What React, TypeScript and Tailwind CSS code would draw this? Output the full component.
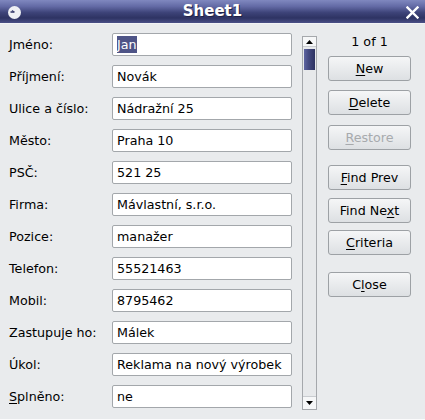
import React from "react";

const fields: [string, string, number?][] = [
  ["Jméno:", "Jan"],
  ["Příjmení:", "Novák"],
  ["Ulice a číslo:", "Nádražní 25"],
  ["Město:", "Praha 10"],
  ["PSČ:", "521 25"],
  ["Firma:", "Mávlastní, s.r.o."],
  ["Pozice:", "manažer"],
  ["Telefon:", "55521463"],
  ["Mobil:", "8795462"],
  ["Zastupuje ho:", "Málek"],
  ["Úkol:", "Reklama na nový výrobek"],
  ["Splněno:", "ne", 0],
];

function Mn({ text, at, disabled }: { text: string; at: number; disabled?: boolean }) {
  return (
    <span className={disabled ? "text-[#a7aaad]" : "text-black"}>
      {text.slice(0, at)}
      <span className="underline underline-offset-2">{text[at]}</span>
      {text.slice(at + 1)}
    </span>
  );
}

function Btn({ text, at, disabled, className }: { text: string; at: number; disabled?: boolean; className?: string }) {
  return (
    <div
      className={
        "h-[25px] w-[83px] flex items-center justify-center rounded-[3px] border border-[#9da1a5] bg-gradient-to-b from-[#f5f6f7] to-[#dde0e3] " +
        (className ?? "")
      }
    >
      <Mn text={text} at={at} disabled={disabled} />
    </div>
  );
}

export default function App() {
  return (
    <div
      className="w-[425px] h-[420px] flex flex-col bg-[#e9ebed] text-[12.7px] text-black overflow-hidden"
      style={{ fontFamily: '"DejaVu Sans", Verdana, sans-serif' }}
    >
      {/* title bar */}
      <div className="relative h-[24px] flex items-center justify-center bg-[linear-gradient(to_bottom,#8088bf_0%,#636aa5_28%,#3d4378_55%,#2e3363_78%,#4a5087_100%)] border-b border-[#f2f3f5]">
        <svg className="absolute left-[7px] top-[5px]" width="15" height="15" viewBox="0 0 15 15">
          <circle cx="7.5" cy="7.5" r="6.5" fill="#eef0f4" />
          <path d="M3.5 7 L7.5 7" stroke="#3b4070" strokeWidth="1.6" />
          <path d="M5 5.5 L7 7" stroke="#3b4070" strokeWidth="1.2" />
        </svg>
        <span className="font-bold text-[15px] text-white [text-shadow:1px_1px_0_#1d2145]">Sheet1</span>
        <svg className="absolute right-[6px] top-[6px]" width="13" height="13" viewBox="0 0 13 13">
          <path d="M1.5 1.5 L11.5 11.5 M11.5 1.5 L1.5 11.5" stroke="#fff" strokeWidth="2.4" strokeLinecap="square" />
        </svg>
      </div>

      {/* body */}
      <div className="flex-1 flex border-b border-[#fbfbfc]">
        <div className="pt-[9px] grid grid-cols-[112px_180px] auto-rows-[23px] gap-y-[9px]">
          {fields.map(([label, value, mn], i) => (
            <React.Fragment key={label}>
              <div className="pl-[9px] flex items-center whitespace-nowrap">
                {mn === undefined ? label : <Mn text={label} at={mn} />}
              </div>
              <div className="flex items-center px-[4px] bg-white border border-[#a3a7ab] rounded-[2px] whitespace-nowrap overflow-hidden">
                {i === 0 ? (
                  <span className="bg-[#4e5487] text-white leading-[17px]">{value}</span>
                ) : (
                  value
                )}
              </div>
            </React.Fragment>
          ))}
        </div>

        {/* scrollbar */}
        <div className="ml-[10px] mt-[12px] mb-[9px] w-[15px] flex flex-col border border-[#a5a8ac] bg-[#e7e9eb]">
          <div className="h-[10px] flex items-center justify-center bg-[#f6f7f8] border-b border-[#c9ccd0]">
            <svg width="7" height="4" viewBox="0 0 7 4"><path d="M0 4 L3.5 0 L7 4 Z" fill="#000" /></svg>
          </div>
          <div className="mt-[2px] h-[21px] mx-[1px] bg-[linear-gradient(to_right,#5e65a2,#454b82_40%,#2e3362)]" />
          <div className="flex-1" />
          <div className="h-[13px] flex items-center justify-center bg-[#f6f7f8] border-t border-[#c9ccd0]">
            <svg width="7" height="4" viewBox="0 0 7 4"><path d="M0 0 L7 0 L3.5 4 Z" fill="#000" /></svg>
          </div>
        </div>

        {/* buttons */}
        <div className="ml-[11px] pt-[10px] flex flex-col items-start">
          <div className="w-[83px] h-[15px] flex items-center justify-center">1 of 1</div>
          <Btn text="New" at={0} className="mt-[7px]" />
          <Btn text="Delete" at={0} className="mt-[9px]" />
          <Btn text="Restore" at={0} disabled className="mt-[10px]" />
          <Btn text="Find Prev" at={0} className="mt-[15px]" />
          <Btn text="Find Next" at={7} className="mt-[8px]" />
          <Btn text="Criteria" at={0} className="mt-[7px]" />
          <Btn text="Close" at={1} className="mt-[17px]" />
        </div>
      </div>
    </div>
  );
}
